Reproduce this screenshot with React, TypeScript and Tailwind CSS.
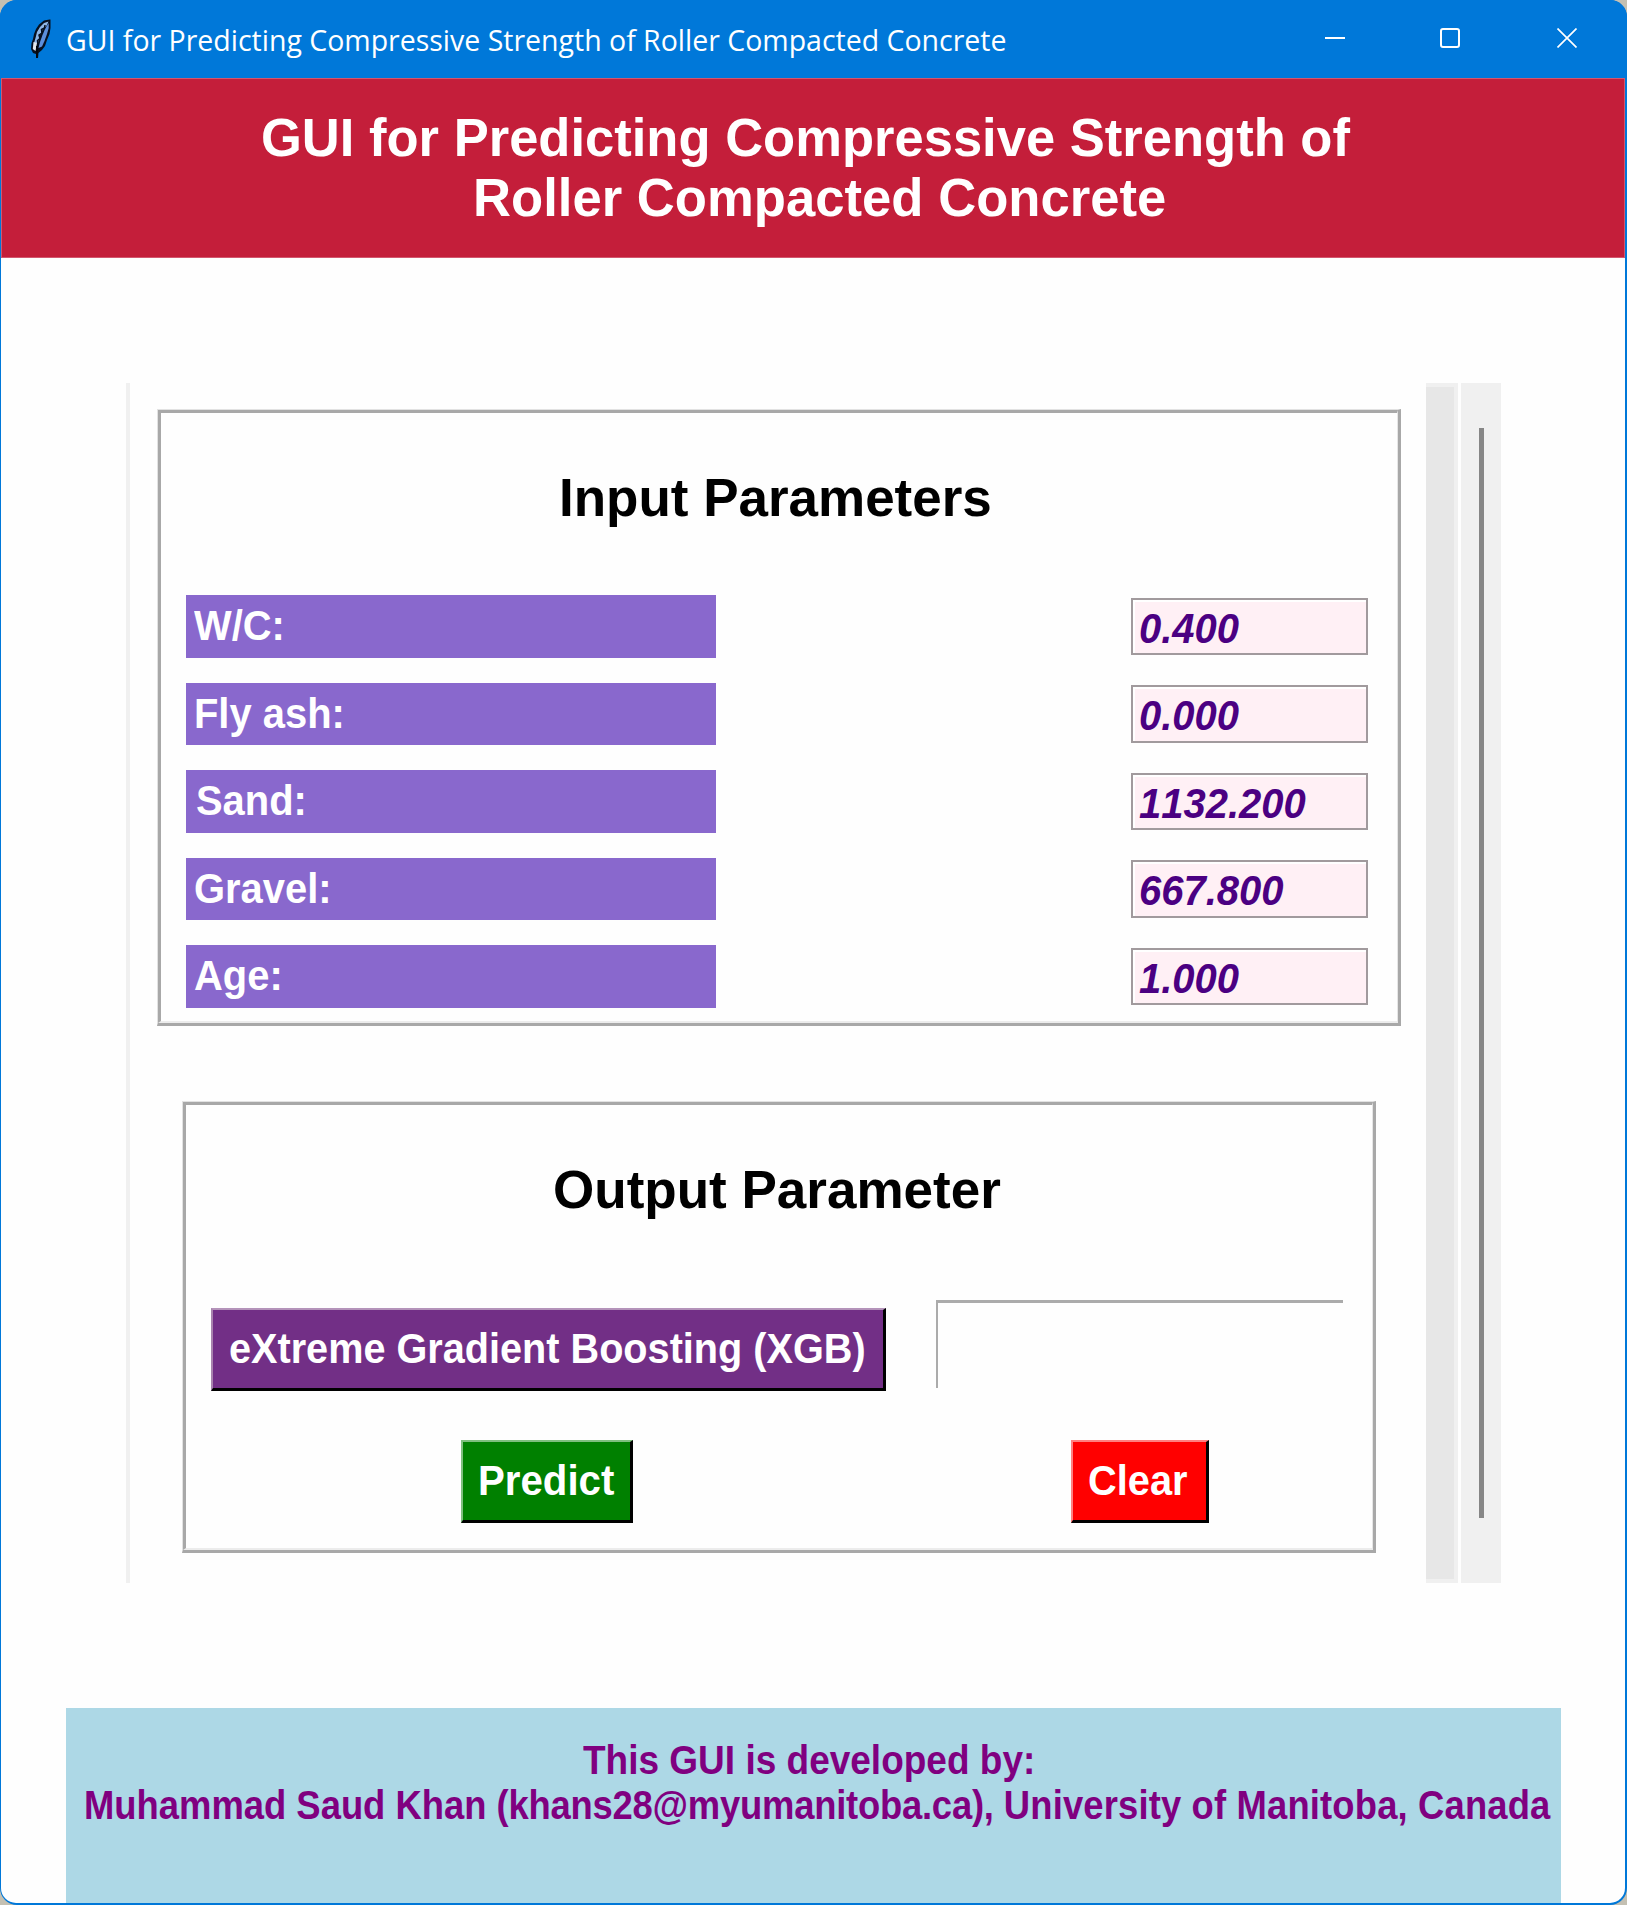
import React from "react";

const inputs = [
  { label: "W/C:", value: "0.400", pad: "pl-[8px]" },
  { label: "Fly ash:", value: "0.000", pad: "pl-[8px]" },
  { label: "Sand:", value: "1132.200", pad: "pl-[10px]" },
  { label: "Gravel:", value: "667.800", pad: "pl-[8px]" },
  { label: "Age:", value: "1.000", pad: "pl-[8px]" },
];

function FeatherIcon() {
  return (
    <svg width="22" height="42" viewBox="0 0 22 42" className="shrink-0">
      <path
        d="M19.500 0.500 L14 1.500 L9 5.500 L6 10 L4 15 L3 20 L1.500 24 L1 30 L3 34 L6 35 L6 39 L8 39 L8.500 34 L12 31 L15 27 L17 21 L19.500 15 L20.500 9 L20.500 0.500 Z"
        fill="#07101f"
      />
      <path d="M18.500 2.500 L14 4 L10 8 L7 13 L5.500 19 L4 24 L8 24 L9.500 17 L12.500 11 L17 6 Z" fill="#8fb6e6" />
      <path d="M18.700 4 L15.500 9 L12.500 16 L10 23 L8.500 29 L12 27.500 L14.500 22 L17 15 L18.700 9 Z" fill="#5c8fdc" />
      <path d="M3.500 23 L2.800 30 L5.500 32 L7 24 Z" fill="#e4e9ee" />
      <path
        d="M15 6 L14.500 9 L11.500 10.500 L12 14 L9 16 L10 19.500 L7.500 21.500 L8 26 L7 28"
        stroke="#07101f"
        strokeWidth="1.500"
        fill="none"
      />
      <path d="M7 27 V39" stroke="#05070c" strokeWidth="2" />
    </svg>
  );
}

function TitleBar() {
  return (
    <div className="flex h-[78px] shrink-0 items-start bg-[#0078d9] text-white">
      <div className="ml-[30px] mt-[19px]">
        <FeatherIcon />
      </div>
      <div className="ml-[13.5px] mt-[20px] w-[950px] whitespace-nowrap font-['Open_Sans'] text-[29px] leading-[40px]">
        <span className="inline-block origin-left scale-x-[0.982]">
          GUI for Predicting Compressive Strength of Roller Compacted Concrete
        </span>
      </div>
      <div className="ml-auto mr-[50px] mt-[28px] flex">
        <svg width="20" height="20" className="mr-[95px]">
          <path d="M0 10H20" stroke="white" strokeWidth="2" />
        </svg>
        <svg width="20" height="20" className="mr-[97px]">
          <rect x="1" y="1" width="18" height="18" rx="2" fill="none" stroke="white" strokeWidth="2" />
        </svg>
        <svg width="20" height="20">
          <path d="M0.500 0.500L19.500 19.500M19.500 0.500L0.500 19.500" stroke="white" strokeWidth="1.700" />
        </svg>
      </div>
    </div>
  );
}

function Groove({ className, children }: { className: string; children: React.ReactNode }) {
  return (
    <div className={`border-l border-t border-b-[3px] border-r-[3px] border-b-[#a8a8a8] border-l-[#e2e2e2] border-r-[#a8a8a8] border-t-[#e2e2e2] ${className}`}>
      <div className="flex h-full flex-col border-b-2 border-l-[3px] border-r border-t-[3px] border-b-[#ececec] border-l-[#a8a8a8] border-r-[#e6e6e6] border-t-[#a8a8a8]">
        {children}
      </div>
    </div>
  );
}

function RaisedButton({ className, children }: { className: string; children: React.ReactNode }) {
  return (
    <button className={`h-[83px] shrink-0 whitespace-nowrap border-b-[3px] border-l-2 border-r-[3px] border-t-2 border-b-black border-r-black pb-[2px] text-left text-[43px] font-bold leading-[76px] text-white ${className}`}>
      {children}
    </button>
  );
}

export default function App() {
  return (
    <div className="h-[1905px] w-[1627px] overflow-hidden bg-[#c4c0b2] font-['Liberation_Sans',Arial,sans-serif] [font-kerning:none]">
      <div className="flex h-full flex-col overflow-hidden rounded-[17px] bg-[#0078d9]">
        <TitleBar />
        <div className="mb-[2px] ml-px mr-[2px] flex min-h-0 flex-1 flex-col overflow-hidden rounded-b-[15px] bg-[#fefefe]">
          <header className="h-[180px] shrink-0 border border-[#d2576e] bg-[#c41e3a] pt-[28px] text-[54px] font-bold leading-[60px] text-white">
            <h1 className="whitespace-nowrap">
              <span className="ml-[259px] block origin-left scale-x-[0.973]">GUI for Predicting Compressive Strength of</span>
              <span className="ml-[471px] block origin-left scale-x-[0.975]">Roller Compacted Concrete</span>
            </h1>
          </header>

          <main className="ml-[125px] mt-[125px] flex h-[1200px] shrink-0">
            <div className="w-[1300px] border-l-4 border-[#f0f0f0] pl-[27px] pt-[26px]">
              <Groove className="h-[617px] w-[1244px]">
                <h2 className="ml-[398px] mt-[54px] origin-left scale-x-[0.981] whitespace-nowrap text-[54px] font-bold leading-[60px] text-black">
                  Input Parameters
                </h2>
                <div className="ml-[25px] mt-[68px] flex flex-col gap-[25px]">
                  {inputs.map((row) => (
                    <div key={row.label} className="flex h-[62.5px] items-center">
                      <div className={`h-[62.5px] w-[530px] whitespace-nowrap bg-[#8968cd] text-[43px] font-bold leading-[61px] text-white ${row.pad}`}>
                        <span className="inline-block origin-left scale-x-[0.928]">{row.label}</span>
                      </div>
                      <div className="ml-[415px] h-[57.5px] w-[237px] border-2 border-[#a19a9d] bg-[#fff0f5] pl-[6px] text-[43px] font-bold italic leading-[56px] text-[#4b0082] shadow-[inset_1px_1px_0_1px_#ffffff]">
                        <span className="inline-block origin-left scale-x-[0.93]">{row.value}</span>
                      </div>
                    </div>
                  ))}
                </div>
              </Groove>

              <Groove className="ml-[25px] mt-[75px] h-[452px] w-[1194px]">
                <h2 className="ml-[367px] mt-[54px] origin-left scale-x-[0.982] whitespace-nowrap text-[54px] font-bold leading-[60px] text-black">
                  Output Parameter
                </h2>
                <div className="ml-[25px] mt-[81px] flex">
                  <RaisedButton className="mt-[8px] w-[675px] border-l-[#a883ae] border-t-[#b493ba] bg-[#722f86] pl-[16px]">
                    <span className="inline-block origin-left scale-x-[0.922]">eXtreme Gradient Boosting (XGB)</span>
                  </RaisedButton>
                  <div className="ml-[50px] h-[88px] w-[407px] border-l-2 border-t-[3px] border-[#ababab]" />
                </div>
                <div className="ml-[275px] mt-[49px] flex">
                  <RaisedButton className="w-[172px] border-l-[#7fbf7f] border-t-[#7fbf7f] bg-[#008000] pl-[15px]">
                    <span className="inline-block origin-left scale-x-[0.935]">Predict</span>
                  </RaisedButton>
                  <RaisedButton className="ml-[438px] w-[138px] border-l-[#ff8080] border-t-[#ff8080] bg-[#ff0000] pl-[15px]">
                    <span className="inline-block origin-left scale-x-[0.925]">Clear</span>
                  </RaisedButton>
                </div>
              </Groove>
            </div>
            <div className="mr-[3px] w-[32px] border-b-4 border-r-4 border-t-4 border-[#f0f0f0] bg-[#e7e7e7]" />
            <div className="w-[40px] bg-[#f0f0f0] pl-[18px] pt-[45px]">
              <div className="h-[1090px] w-[5px] bg-[#868686]" />
            </div>
          </main>

          <footer className="ml-[65px] mt-[125px] min-h-0 w-[1495px] flex-1 bg-[#add8e6] pt-[30px] text-[40px] font-bold leading-[45px] text-[#800080]">
            <p className="whitespace-nowrap">
              <span className="ml-[517px] block w-max origin-left scale-x-[0.925]">This GUI is developed by:</span>
              <span className="ml-[18px] block w-max origin-left scale-x-[0.91]">
                Muhammad Saud Khan <span className="tracking-[-0.25px]">(khans28@myumanitoba.ca),</span>{" "}
                <span className="tracking-[0.17px]">University of Manitoba, Canada</span>
              </span>
            </p>
          </footer>
        </div>
      </div>
    </div>
  );
}
